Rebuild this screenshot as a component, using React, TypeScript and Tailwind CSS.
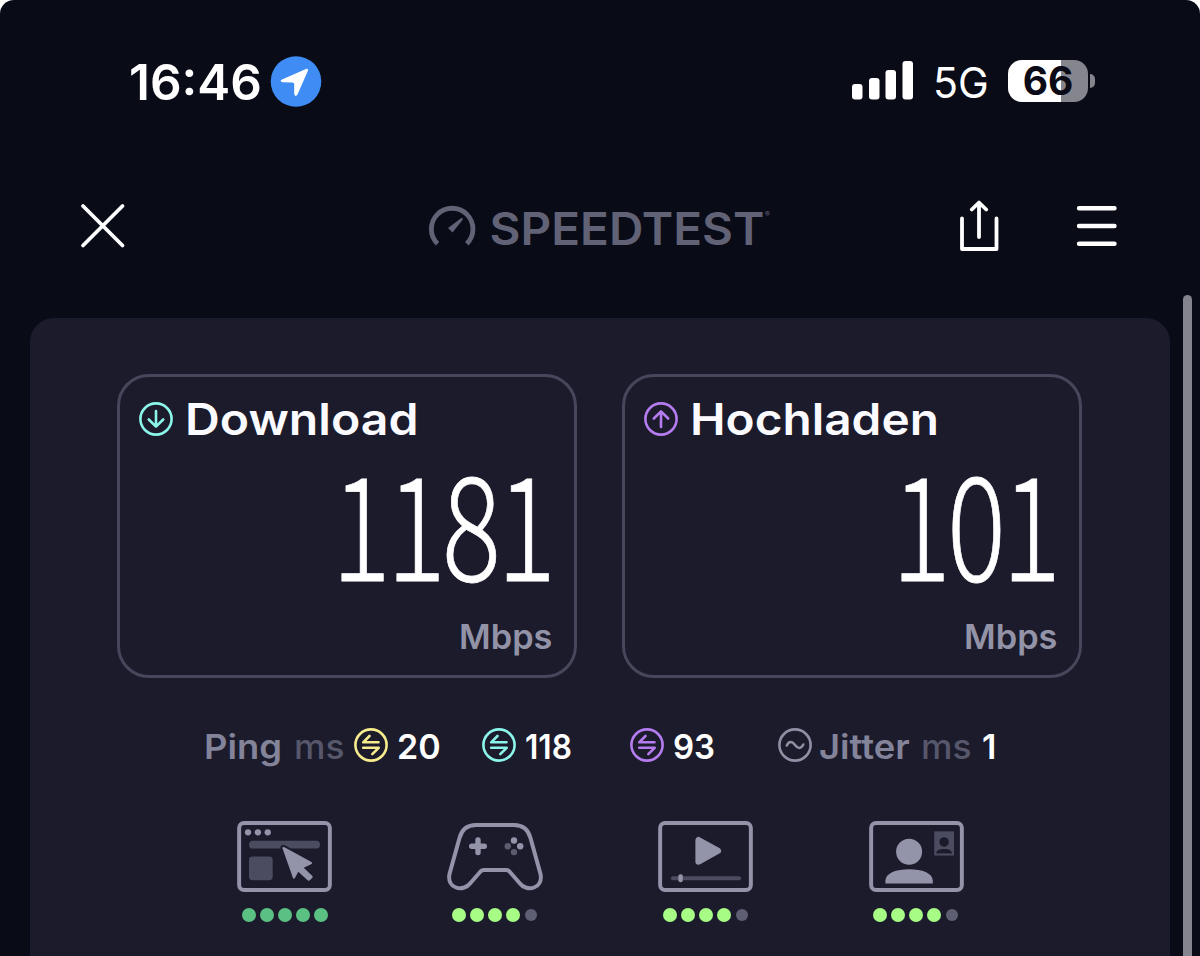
import type { ReactNode } from "react";
import clsx from "clsx";

interface ResultBoxProps {
  label: ReactNode;
  icon: ReactNode;
  value: string;
}

const TEAL = "#8cf5ea";
const PURPLE = "#b57cf0";
const YELLOW = "#f7ec8d";
const GREY = "#9394aa";
const DIM = "#4b4c5f";

function ArrowCircle({ color, up }: { color: string; up?: boolean }) {
  return (
    <svg className="h-9 w-9 shrink-0" viewBox="0 0 36 36" fill="none" stroke={color} strokeWidth="2.6" strokeLinecap="round" strokeLinejoin="round">
      <circle cx="18" cy="18" r="15.6" />
      <path d={up ? "M18 26V10.5M10.8 17.5L18 10.3L25.2 17.5" : "M18 10V25.5M10.8 18.5L18 25.7L25.2 18.5"} />
    </svg>
  );
}

function PingCircle({ color }: { color: string }) {
  return (
    <svg className="h-9 w-9 shrink-0" viewBox="0 0 36 36" fill="none" stroke={color} strokeWidth="2.6" strokeLinecap="round" strokeLinejoin="round">
      <circle cx="18" cy="18" r="15.6" />
      <path d="M16.5 9L10.2 15.3H25.5M10.2 20.8H25.7L19.3 27.2" />
    </svg>
  );
}

function ResultBox({ label, icon, value }: ResultBoxProps) {
  return (
    <div className="flex h-[304px] w-[460px] flex-col rounded-[32px] border-[3px] border-[#46475b]">
      <div className="ml-[18px] mt-[15px] flex h-[54px] items-center text-[44px] font-semibold leading-none text-[#fafaff]">
        {icon}
        <span className="ml-[11px]">{label}</span>
      </div>
      <div className="mt-[19px] flex h-[107px] items-center justify-end pr-[22px] text-white">
        <span className="origin-right scale-x-[0.765] font-['Noto_Sans_CJK_SC',sans-serif] text-[144px] font-light leading-[107px] tracking-[-5px] [-webkit-text-stroke:0.8px_white]">
          {value}
        </span>
      </div>
      <div className="mt-[43px] flex h-[44px] items-center justify-end pr-[22px] text-[34px] font-semibold leading-none text-[#9393a8]">
        <span className="origin-right scale-x-[1.01]">Mbps</span>
      </div>
    </div>
  );
}

function Dots({ score, color }: { score: number; color: string }) {
  return (
    <div className="mt-[16px] flex gap-1">
      {[1, 2, 3, 4, 5].map((n) => (
        <span
          key={n}
          className={clsx("h-3.5 w-3.5 rounded-full", n <= score ? color : "scale-[0.86] bg-[#5f5f73]")}
        />
      ))}
    </div>
  );
}

function BrowserIcon() {
  return (
    <svg className="h-[71px] w-[95px]" viewBox="0 0 96 72" fill="none">
      <rect x="2" y="2" width="92" height="68" rx="5" stroke={GREY} strokeWidth="4" />
      <g fill={GREY}>
        <circle cx="11" cy="11.5" r="3.2" />
        <circle cx="21" cy="11.5" r="3.2" />
        <circle cx="31" cy="11.5" r="3.2" />
      </g>
      <rect x="12" y="20" width="72" height="8" rx="4" fill={DIM} />
      <rect x="12" y="36" width="24" height="24" rx="3.5" fill={DIM} />
      <path
        d="M46 28L56.5 57.5Q57.5 59.5 58.7 57.5L62 51.5L72 60.5Q73 61 73.7 60.2L76.3 57.6Q77 56.6 76.3 55.8L67.5 47.5L75.5 43.5Q76.8 42.5 75.3 41.5L48 26.6Q45 25.5 46 28Z"
        fill={GREY}
        stroke="#1b1b2c"
        strokeWidth="4"
        paintOrder="stroke"
      />
    </svg>
  );
}

function GamepadIcon() {
  return (
    <svg className="h-[71px] w-[98px]" viewBox="0 0 98 71" fill="none">
      <path
        d="M30 4H68Q81 4 84.5 17L94.5 53C97.5 67 81 72 73.5 62L63.5 50.5Q62 49 60 49H38Q36 49 34.5 50.5L24.5 62C17 72 .5 67 3.5 53L13.5 17Q17 4 30 4Z"
        stroke={GREY}
        strokeWidth="4"
      />
      <path d="M32 19V31.5M25.7 25.3H38.3" stroke={GREY} strokeWidth="5.4" strokeLinecap="round" />
      <circle cx="68" cy="19.5" r="3.2" fill={GREY} />
      <circle cx="74.2" cy="25.3" r="3.2" fill={GREY} />
      <circle cx="61.8" cy="25.3" r="3.2" fill="#5c5c70" />
      <circle cx="68" cy="31.1" r="3.2" fill="#5c5c70" />
    </svg>
  );
}

function VideoIcon() {
  return (
    <svg className="h-[71px] w-[95px]" viewBox="0 0 96 72" fill="none">
      <rect x="2" y="2" width="92" height="68" rx="5" stroke={GREY} strokeWidth="4" />
      <path d="M41 19.5V41L60.5 30.2Z" fill={GREY} stroke={GREY} strokeWidth="6.5" strokeLinejoin="round" />
      <path d="M15 58H82" stroke={DIM} strokeWidth="4" strokeLinecap="round" />
      <rect x="20.5" y="54" width="4.5" height="8" rx="2" fill={GREY} />
    </svg>
  );
}

function CallIcon() {
  return (
    <svg className="h-[71px] w-[95px]" viewBox="0 0 96 72" fill="none">
      <rect x="2" y="2" width="92" height="68" rx="5" stroke={GREY} strokeWidth="4" />
      <circle cx="40.5" cy="31.2" r="13.2" fill={GREY} />
      <path d="M16.5 63.5V60C17 53 27 49 40.5 49S64 53 64.5 60V63.5Z" fill={GREY} />
      <rect x="66" y="10.5" width="20" height="24.5" fill={DIM} />
      <circle cx="76" cy="21.2" r="4.8" fill="#1b1b2c" />
      <path d="M68 33C68 30 71 28.5 76 28.5S84 30 84 33Z" fill="#1b1b2c" />
    </svg>
  );
}

const quality = [
  { icon: <BrowserIcon />, score: 5, color: "bg-[#5bc183]" },
  { icon: <GamepadIcon />, score: 4, color: "bg-[#a6fc84]" },
  { icon: <VideoIcon />, score: 4, color: "bg-[#a6fc84]" },
  { icon: <CallIcon />, score: 4, color: "bg-[#a6fc84]" },
];

export default function App() {
  return (
    <div className="bg-white">
      <div className="relative h-[956px] w-[1200px] overflow-hidden rounded-t-[14px] bg-[#090b17] font-['Inter',sans-serif]">
        {/* status bar */}
        <div className="flex h-[162px] items-center pl-[129px] pr-[105px]">
          <span className="w-[141px] whitespace-nowrap pt-0.5 text-[49px] font-semibold leading-none text-white">
            <span className="inline-block origin-left scale-x-[1.01]">16:46</span>
          </span>
          <svg className="h-[52px] w-[52px]" viewBox="0 0 52 52">
            <circle cx="26" cy="26.5" r="25.3" fill="#3f8cf5" />
            <path d="M12 24.5L36 14Q38.8 13.2 37.8 16L27.5 39.5Q25.5 42.5 24.2 39V29Q24 27.5 22.5 27.5L12.5 27.2Q9 26 12 24.5Z" fill="#fff" />
          </svg>
          <svg className="ml-auto h-[40px] w-[61px]" viewBox="0 0 61 40" fill="#fff">
            <rect x="0" y="23" width="10.5" height="15.5" rx="3" />
            <rect x="17" y="17" width="10.5" height="21.5" rx="3" />
            <rect x="33.5" y="9" width="10.5" height="29.5" rx="3" />
            <rect x="50.5" y="0" width="10.5" height="38.5" rx="3" />
          </svg>
          <span className="ml-[20px] w-[75px] whitespace-nowrap pt-1 text-[42px] leading-none text-white">
            <span className="inline-block origin-left scale-x-[0.98]">5G</span>
          </span>
          <div className="flex h-[42px] w-[80px] items-center justify-center rounded-[14px] bg-[linear-gradient(90deg,#fff_66%,#85858d_66%)] pb-0.5 text-[39px] font-bold leading-none text-[#0a0b16]">
            66
          </div>
          <div className="ml-[2px] h-[14px] w-[5px] rounded-r-[5px] bg-[#85858d]" />
        </div>

        {/* nav */}
        <div className="flex h-[128px] items-center pl-[80px] pr-[82px]">
          <svg className="h-[46px] w-[46px]" viewBox="0 0 46 46" stroke="#fff" strokeWidth="3.8" strokeLinecap="round">
            <path d="M3 3L42.5 42.5M42.5 3L3 42.5" />
          </svg>
          <svg className="ml-[302px] h-[50px] w-[356px] overflow-visible" viewBox="0 0 356 50">
            <path d="M9.5 42.8A20.8 20.8 0 1 1 38.8 42.8" fill="none" stroke="#626276" strokeWidth="4.8" />
            <path d="M20 27L33 17.2Q35.5 16.5 34.5 19L24.5 31.5Z" fill="#626276" />
            <text x="61.5" y="43.5" textLength="275" lengthAdjust="spacingAndGlyphs" fontSize="45" fontWeight="600" fill="#626276">
              SPEEDTEST
            </text>
            <text x="337" y="16" fontSize="7" fill="#626276">
              ®
            </text>
          </svg>
          <svg className="ml-auto h-[52px] w-[42px]" viewBox="0 0 42 52" fill="none" stroke="#fff" strokeWidth="3.8" strokeLinecap="round" strokeLinejoin="round">
            <path d="M4 18.5V49H38.5V18.5M21 37V3M13.8 9.5L21 2.5L28.2 9.5" />
          </svg>
          <svg className="ml-[74px] h-[44px] w-[44px]" viewBox="0 0 44 44" stroke="#fff" strokeWidth="4.4" strokeLinecap="round">
            <path d="M5 4.2H40.5M5 22H40.5M5 39.7H40.5" />
          </svg>
        </div>

        {/* result card */}
        <div className="mx-[30px] mt-[28px] h-[700px] rounded-t-[24px] bg-[#1b1b2c] pt-[56px]">
          <div className="flex gap-[45px] pl-[87px]">
            <ResultBox
              icon={<ArrowCircle color={TEAL} />}
              label={<span className="inline-block origin-left scale-x-[1.095]">Download</span>}
              value="1181"
            />
            <ResultBox
              icon={<ArrowCircle color={PURPLE} up />}
              label={<span className="inline-block origin-left scale-x-[1.085]">Hochladen</span>}
              value="101"
            />
          </div>

          <div className="mt-[45px] flex h-[44px] items-center whitespace-nowrap pl-[173px] text-[34px] font-semibold text-white">
            <span className="w-[91px] pl-px pt-0.5 text-[#83839a]"><span className="inline-block origin-left scale-x-[1.07]">Ping</span></span>
            <span className="w-[59px] pt-0.5 font-medium text-[#57576b]"><span className="inline-block origin-left scale-x-[1.04]">ms</span></span>
            <PingCircle color={YELLOW} />
            <span className="w-[92px] pl-2 pt-0.5">20</span>
            <PingCircle color={TEAL} />
            <span className="w-[112px] pl-2 pt-0.5"><span className="inline-block origin-left scale-x-[0.93]">118</span></span>
            <PingCircle color={PURPLE} />
            <span className="w-[112px] pl-2 pt-0.5"><span className="inline-block origin-left scale-x-[0.97]">93</span></span>
            <svg className="h-9 w-9 shrink-0" viewBox="0 0 36 36" fill="none" stroke="#9090a5" strokeWidth="2.6" strokeLinecap="round">
              <circle cx="18" cy="18" r="15.6" />
              <path d="M9.8 18.5C12 14 15 14 18 18S24 22 26.3 17.5" />
            </svg>
            <span className="w-[108px] pl-1.5 pt-0.5 text-[#83839a]"><span className="inline-block origin-left scale-x-[1.07]">Jitter</span></span>
            <span className="w-[61px] pt-0.5 font-medium text-[#57576b]"><span className="inline-block origin-left scale-x-[1.04]">ms</span></span>
            <span className="pt-0.5">1</span>
          </div>

          <div className="ml-[149.5px] mt-[54px] grid w-[842px] grid-cols-4">
            {quality.map((q, i) => (
              <div key={i} className="flex flex-col items-center">
                {q.icon}
                <Dots score={q.score} color={q.color} />
              </div>
            ))}
          </div>
        </div>

        {/* scrollbar */}
        <div className="absolute right-2 top-[295px] h-[680px] w-[9px] rounded-full bg-[#84848e]" />
      </div>
    </div>
  );
}
